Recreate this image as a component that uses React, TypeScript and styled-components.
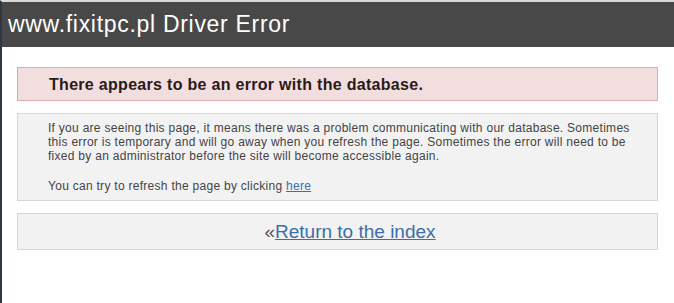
import React from 'react';
import styled, { createGlobalStyle } from 'styled-components';

const GlobalStyle = createGlobalStyle`
  html, body {
    margin: 0;
    padding: 0;
    background: #ffffff;
  }
  body {
    font-family: "Liberation Sans", Arial, sans-serif;
  }
`;

const Page = styled.div`
  min-height: 303px;
  border-left: 2px solid #2e3740;
  box-sizing: border-box;
  border-top: 2px solid #d9d9d9;
`;

const Header = styled.div`
  height: 45px;
  background: #484848;
  color: #ffffff;
  font-size: 23px;
  line-height: 45px;
  padding-left: 6px;
  letter-spacing: 0.7px;
`;

const Main = styled.div`
  display: flex;
  flex-direction: column;
  gap: 12px;
  padding: 20px 16px 0 15px;
`;

const Panel = styled.div<{ $tone?: 'error' | 'plain' }>`
  box-sizing: border-box;
  border: 1px solid ${p => (p.$tone === 'error' ? '#dcabab' : '#d6d6d6')};
  background: ${p => (p.$tone === 'error' ? '#f2dede' : '#f2f2f2')};
`;

const ErrorTitle = styled.h1`
  margin: 0;
  height: 32px;
  padding-left: 31px;
  font-size: 16px;
  line-height: 33px;
  font-weight: bold;
  letter-spacing: 0.3px;
  color: #2a1a1a;
`;

const Message = styled.div`
  padding: 7px 10px 7px 30px;
  font-size: 12px;
  line-height: 14px;
  letter-spacing: 0.28px;
  color: #444444;
  white-space: nowrap;

  p {
    margin: 0 0 16px 0;
  }
  p:last-child {
    margin-bottom: 0;
  }
`;

const Link = styled.a`
  color: #3c6ea9;
  text-decoration: underline;
`;

const ReturnRow = styled.div`
  height: 35px;
  display: flex;
  justify-content: center;
  align-items: center;
  font-size: 19px;
  color: #555555;
  padding-left: 25px;
`;

export default function App() {
  return (
    <>
      <GlobalStyle />
      <Page>
        <Header>www.fixitpc.pl Driver Error</Header>
        <Main>
          <Panel $tone="error">
            <ErrorTitle>There appears to be an error with the database.</ErrorTitle>
          </Panel>
          <Panel>
            <Message>
              <p>
                If you are seeing this page, it means there was a problem communicating with our database. Sometimes
                <br />
                this error is temporary and will go away when you refresh the page. Sometimes the error will need to be
                <br />
                fixed by an administrator before the site will become accessible again.
              </p>
              <p>
                You can try to refresh the page by clicking <Link href="#">here</Link>
              </p>
            </Message>
          </Panel>
          <Panel>
            <ReturnRow>
              «<Link href="#">Return to the index</Link>
            </ReturnRow>
          </Panel>
        </Main>
      </Page>
    </>
  );
}
